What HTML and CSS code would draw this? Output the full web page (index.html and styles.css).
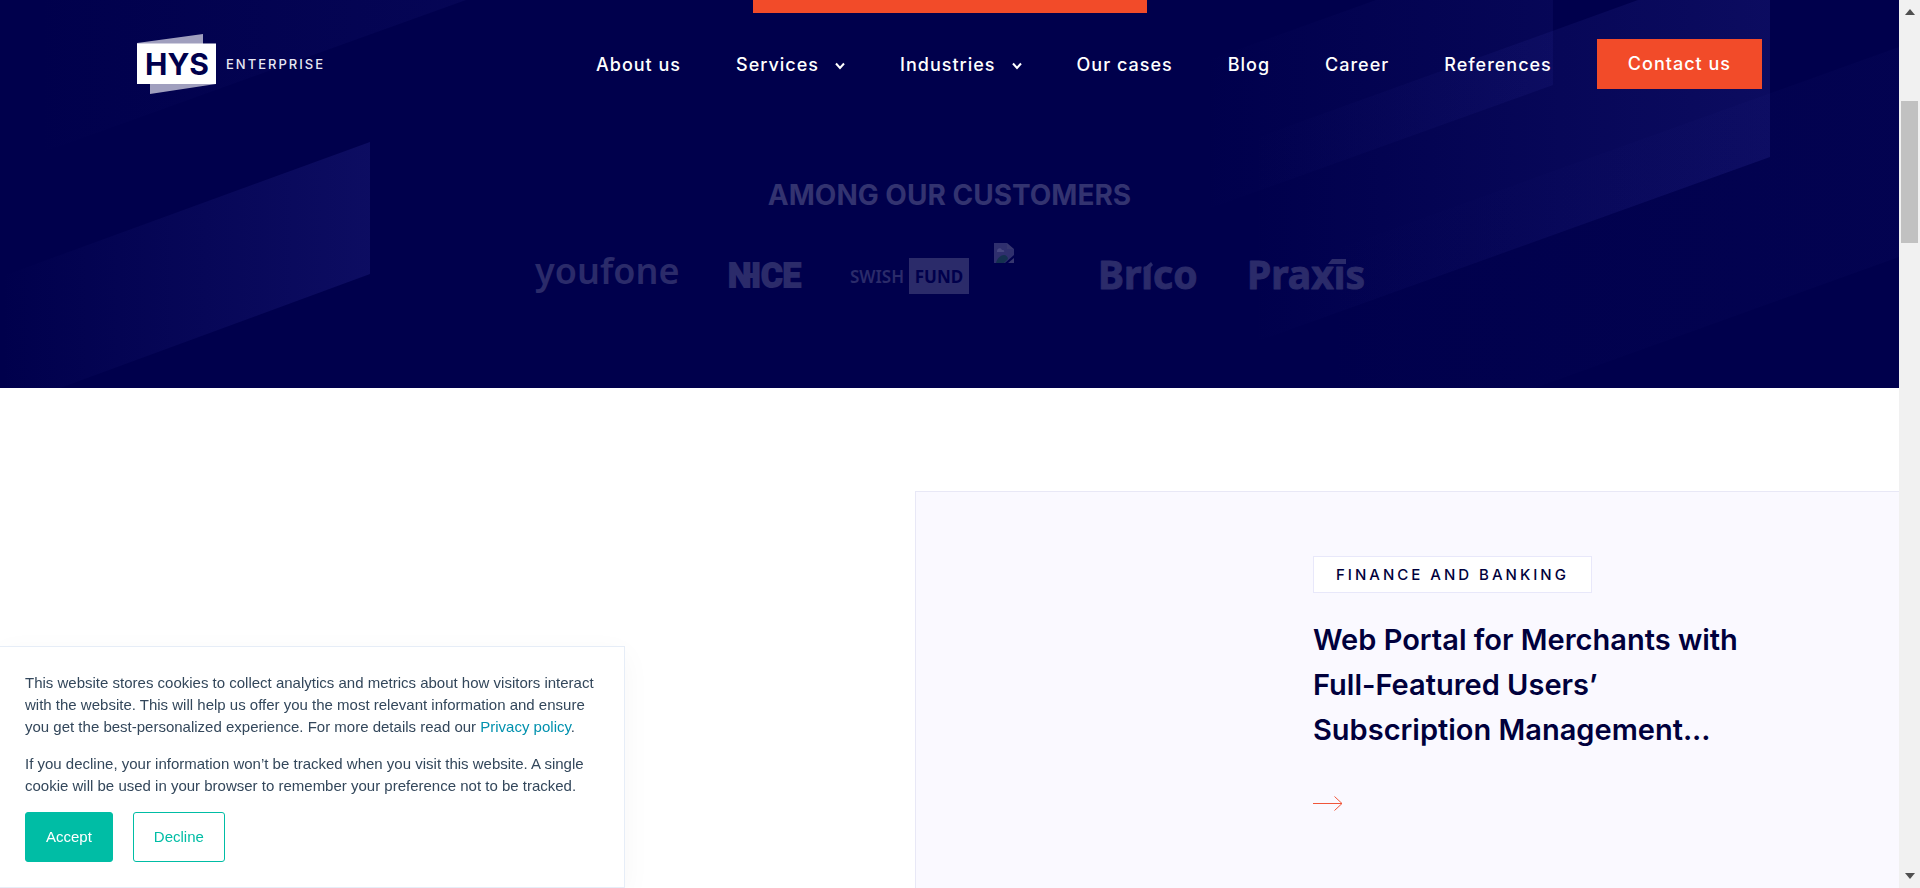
FILE: index.html
```html
<!DOCTYPE html>
<html lang="en">
<head>
<meta charset="utf-8">
<meta name="viewport" content="width=device-width, initial-scale=1">
<title>HYS Enterprise</title>
<link rel="stylesheet" href="styles.css">
</head>
<body>
<div class="page">
  <header class="header">
    <a class="brand" href="#" aria-label="HYS Enterprise">
      <svg class="brand-mark" viewBox="0 0 79 60" aria-hidden="true">
        <path d="M0 9 66 0v10H0zM13 50h66L13 60z" fill="#a09fbe"/>
        <path d="M0 9.500h79V50H0z" fill="#fff"/>
        <text class="brand-hys" x="40" y="41">HYS</text>
      </svg>
      <span class="brand-name">ENTERPRISE</span>
    </a>
    <nav class="nav">
      <a href="#">About us</a>
      <a class="has-menu" href="#">Services
        <svg class="chevron" viewBox="0 0 10 8" aria-hidden="true"><path d="M1 1.500 5 6l4-4.500"/></svg>
      </a>
      <a class="has-menu" href="#">Industries
        <svg class="chevron" viewBox="0 0 10 8" aria-hidden="true"><path d="M1 1.500 5 6l4-4.500"/></svg>
      </a>
      <a href="#">Our cases</a>
      <a href="#">Blog</a>
      <a href="#">Career</a>
      <a href="#">References</a>
    </nav>
    <a class="contact" href="#">Contact us</a>
  </header>

  <section class="hero">
    <svg class="beams" viewBox="0 0 1899 388" preserveAspectRatio="xMidYMin slice" aria-hidden="true">
      <defs>
        <linearGradient id="b1" gradientUnits="userSpaceOnUse" x1="0" y1="0" x2="370" y2="0"><stop offset="0" stop-color="#5a5ae6" stop-opacity="0"/><stop offset="1" stop-color="#5a5ae6" stop-opacity=".14"/></linearGradient>
        <linearGradient id="b2" gradientUnits="userSpaceOnUse" x1="30" y1="0" x2="466" y2="0"><stop offset="0" stop-color="#5a5ae6" stop-opacity="0"/><stop offset="1" stop-color="#5a5ae6" stop-opacity=".06"/></linearGradient>
        <linearGradient id="b3" gradientUnits="userSpaceOnUse" x1="1200" y1="0" x2="1553" y2="0"><stop offset="0" stop-color="#5a5ae6" stop-opacity="0"/><stop offset="1" stop-color="#5a5ae6" stop-opacity=".07"/></linearGradient>
        <linearGradient id="b4" gradientUnits="userSpaceOnUse" x1="1250" y1="0" x2="1770" y2="0"><stop offset="0" stop-color="#5a5ae6" stop-opacity="0"/><stop offset="1" stop-color="#5a5ae6" stop-opacity=".13"/></linearGradient>
        <linearGradient id="b5" gradientUnits="userSpaceOnUse" x1="1300" y1="0" x2="1899" y2="0"><stop offset="0" stop-color="#5a5ae6" stop-opacity="0"/><stop offset="1" stop-color="#5a5ae6" stop-opacity=".03"/></linearGradient>
      </defs>
      <path fill="url(#b1)" d="M370 142v132L60 388H0V277z"/>
      <path fill="url(#b2)" d="M0 0h466L41 153 0 168z"/>
      <path fill="url(#b3)" d="M1376 0h177v85l-353 127V63z"/>
      <path fill="url(#b4)" d="M1638 0h132v157l-520 187V140z"/>
      <path fill="url(#b5)" d="M1899 47v210l-364 131h-235V262z"/>
    </svg>
    <div class="cta-edge"></div>
    <h2 class="customers-title">AMONG OUR CUSTOMERS</h2>
    <div class="customers">
      <svg width="170" height="52" viewBox="0 0 170 52" role="img" aria-label="youfone"><text class="lg-youfone" x="0" y="41">youfone</text></svg>
      <svg width="97" height="52" viewBox="0 0 97 52" role="img" aria-label="NICE"><text class="lg-nice" x="-1" y="44">NICE</text><path d="M16 30h14v5H16z"/></svg>
      <svg width="120" height="52" viewBox="0 0 120 52" role="img" aria-label="Swish Fund"><text class="lg-swish" x="0" y="40">SWISH</text><path d="M59 15h60v36H59z"/><text class="lg-fund" x="89" y="40">FUND</text></svg>
      <svg class="missing" width="82" height="52" viewBox="0 0 82 52" aria-hidden="true"><path d="M0 0h13v6h7v6L11 20H0z" fill="#2f2f6e"/><path d="M13 0l7 6h-7zM20 15v5h-6z" fill="#36366f"/><path d="M3 8c0-3 4-4 5-1 3 0 3 2 1 2H3z" fill="#474780"/><path d="M2 20c1-5 5-8 8-8 2 0 4 2 4 4l-4 4z" fill="#14304f"/></svg>
      <svg width="125" height="52" viewBox="0 0 125 52" role="img" aria-label="Brico"><text class="lg-round" x="-2" y="46">Br&#305;co</text><path d="M43 26l8-7 2 3-6 6z"/></svg>
      <svg width="115" height="52" viewBox="0 0 115 52" role="img" aria-label="Praxis"><text class="lg-round" x="-2" y="46">Prax&#305;s</text><path d="M83 16h14v5H79z"/></svg>
    </div>
  </section>

  <main class="cases">
    <article class="case">
      <div class="case-body">
        <span class="tag">FINANCE AND BANKING</span>
        <h3 class="case-title">Web Portal for Merchants with<br>Full-Featured Users’<br>Subscription Management...</h3>
        <a class="case-link" href="#" aria-label="Read the case">
          <svg viewBox="0 0 30 15" aria-hidden="true"><path d="M0 7.500h29M21.500 .5 29 7.500l-7.500 7"/></svg>
        </a>
      </div>
    </article>
  </main>
</div>

<div class="scrollbar" aria-hidden="true">
  <svg class="scroll-arrow" viewBox="0 0 10 6"><path d="M5 0l5 6H0z"/></svg>
  <div class="scroll-thumb"></div>
  <svg class="scroll-arrow scroll-down" viewBox="0 0 10 6"><path d="M0 0h10L5 6z"/></svg>
</div>

<div class="cookie" role="dialog" aria-label="Cookies">
  <p>This website stores cookies to collect analytics and metrics about how visitors interact with the website. This will help us offer you the most relevant information and ensure you get the best-personalized experience. For more details read our <a href="#">Privacy policy</a>.</p>
  <p>If you decline, your information won’t be tracked when you visit this website. A single cookie will be used in your browser to remember your preference not to be tracked.</p>
  <div class="cookie-actions">
    <button class="btn accept" type="button">Accept</button>
    <button class="btn decline" type="button">Decline</button>
  </div>
</div>
</body>
</html>
```
FILE: styles.css
```css
* { box-sizing: border-box; }

body {
  margin: 0;
  display: flex;
  height: 100vh;
  overflow: hidden;
  background: #fff;
  font-family: Inter, "Liberation Sans", sans-serif;
}

a { color: inherit; text-decoration: none; }

.page {
  position: relative;
  flex: 1;
  min-width: 0;
  display: flex;
  flex-direction: column;
}

/* Header */
.header {
  position: absolute;
  z-index: 2;
  top: 0;
  left: 0;
  right: 0;
  display: flex;
  align-items: center;
  padding: 34px 137px 0;
  color: #fff;
  font-size: 18px;
  font-weight: 500;
  letter-spacing: 1px;
}

.brand { display: flex; align-items: center; gap: 10px; }
.brand-mark { width: 79px; height: 60px; }
.brand-hys {
  font: 700 30px Inter, sans-serif;
  letter-spacing: 0;
  text-anchor: middle;
  fill: #00004c;
}
.brand-name { font-size: 13px; font-weight: 500; letter-spacing: 2px; color: #e8e8f4; }

.nav {
  display: flex;
  align-items: center;
  gap: 55px;
  margin-left: auto;
}
.has-menu { display: flex; align-items: center; gap: 16px; }
.chevron {
  width: 10px;
  height: 8px;
  margin-top: 4px;
  fill: none;
  stroke: #fff;
  stroke-width: 2;
}
.contact {
  margin-left: 45px;
  padding: 0 31px;
  line-height: 50px;
  background: #f24b29;
}

/* Hero */
.hero {
  position: relative;
  display: flex;
  flex-direction: column;
  align-items: center;
  padding-bottom: 93px;
  background: #00004c;
  overflow: hidden;
}
.beams { position: absolute; inset: 0; width: 100%; height: 100%; }
.cta-edge { position: relative; width: 394px; height: 13px; background: #f24b29; }
.customers-title {
  position: relative;
  margin: 165px 0 31px;
  color: #333370;
  font-size: 28px;
  line-height: 34px;
  font-weight: 700;
}
.customers { position: relative; display: flex; gap: 24px; fill: #2b2b6a; }
.customers svg { overflow: visible; }
.lg-youfone { font: 600 36px "Noto Sans", sans-serif; }
.lg-nice {
  font: 700 33px Roboto, sans-serif;
  stroke: #2b2b6a;
  stroke-width: 2;
}
.lg-swish { font: 600 17px "Noto Sans", sans-serif; }
.lg-fund { font: 700 17px "Noto Sans", sans-serif; text-anchor: middle; fill: #00004c; }
.lg-round {
  font: 700 39px "Noto Sans", sans-serif;
  stroke: #2b2b6a;
  stroke-width: 1;
  stroke-linejoin: round;
}

/* Cases */
.cases { flex: 1; display: flex; padding-top: 103px; }
.case {
  flex: 1;
  margin-left: 915px;
  padding: 64px 0 0 397px;
  border: solid #e8e8f6;
  border-width: 1px 0 0 1px;
  background: #faf9ff;
  color: #00003c;
}
.case-body { display: flex; flex-direction: column; align-items: flex-start; }
.tag {
  padding: 0 22px;
  border: 1px solid #e8e8fa;
  background: #fff;
  font-size: 15px;
  line-height: 35px;
  font-weight: 500;
  letter-spacing: 3px;
}
.case-title {
  margin: 24px 0 0;
  font-size: 29px;
  line-height: 45px;
  font-weight: 600;
}
.case-link { margin-top: 44px; }
.case-link svg {
  display: block;
  width: 30px;
  height: 15px;
  fill: none;
  stroke: #f0563a;
}

/* Scrollbar */
.scrollbar {
  display: flex;
  flex-direction: column;
  align-items: center;
  width: 21px;
  padding: 9px 0;
  background: #f1f1f1;
}
.scroll-arrow { width: 10px; height: 6px; fill: #505050; }
.scroll-thumb { width: 17px; height: 142px; margin-top: 86px; background: #c1c1c1; }
.scroll-down { margin-top: auto; }

/* Cookie notice */
.cookie {
  position: fixed;
  z-index: 3;
  left: 0;
  bottom: 0;
  width: 625px;
  padding: 25px;
  border: solid #e6edf7;
  border-width: 1px 1px 1px 0;
  background: #fff;
  box-shadow: 0 8px 28px rgba(0, 0, 0, .04);
  color: #33475b;
  font: 15px/22px "Liberation Sans", Arial, sans-serif;
}
.cookie p { margin: 0 0 15px; }
.cookie a { color: #0091ae; }
.cookie-actions { display: flex; gap: 20px; }
.btn {
  height: 50px;
  padding: 0 20px;
  border: 1px solid #00bda5;
  border-radius: 3px;
  font: 15px/22px "Liberation Sans", Arial, sans-serif;
}
.accept { background: #00bda5; color: #fff; }
.decline { background: #fff; color: #00bda5; }
```
